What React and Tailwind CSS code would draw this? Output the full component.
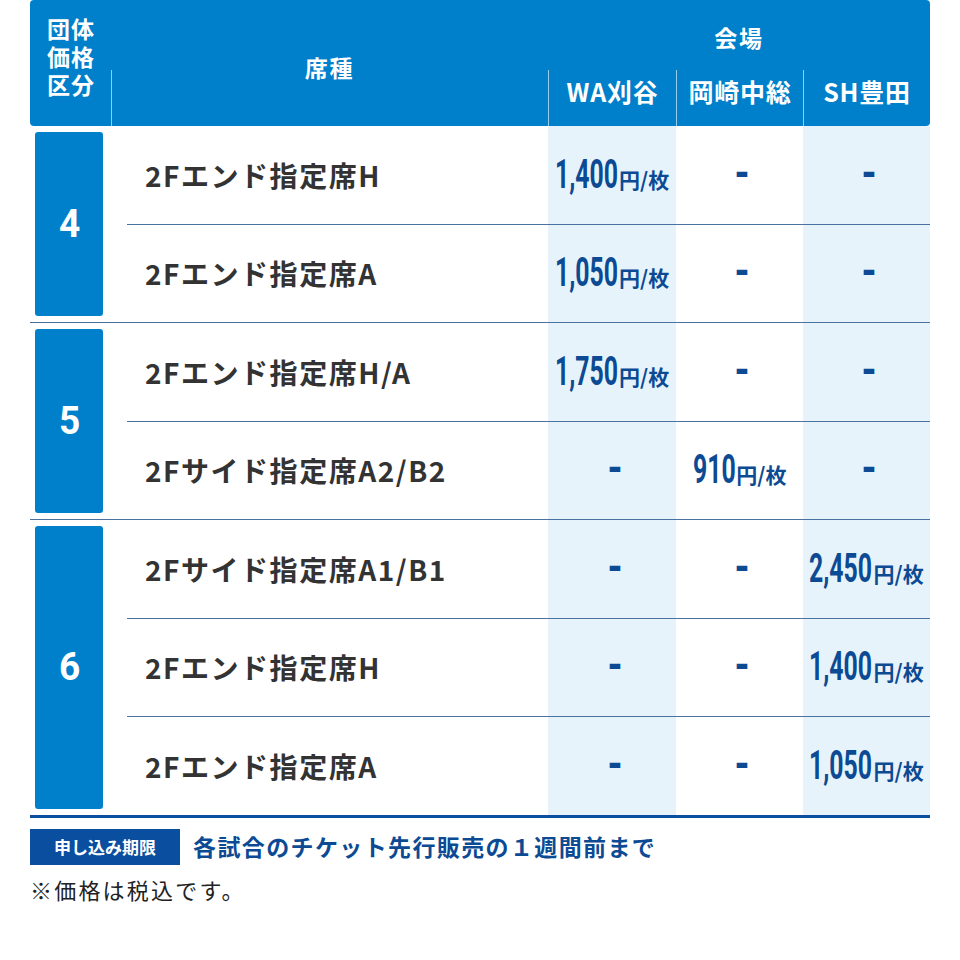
import React, { useLayoutEffect, useRef, useState } from 'react';

const jp = { fontFamily: '"Noto Sans CJK JP", "Noto Sans", sans-serif' };
const jpTight = { fontFamily: '"Liberation Sans", "Noto Sans CJK JP", sans-serif' };
const num = { fontFamily: 'Roboto, "Liberation Sans", sans-serif' };

const groups = [
  {
    no: '4',
    rows: [
      { name: '2Fエンド指定席H', prices: ['1,400', null, null] },
      { name: '2Fエンド指定席A', prices: ['1,050', null, null] },
    ],
  },
  {
    no: '5',
    rows: [
      { name: '2Fエンド指定席H/A', prices: ['1,750', null, null] },
      { name: '2Fサイド指定席A2/B2', prices: [null, '910', null] },
    ],
  },
  {
    no: '6',
    rows: [
      { name: '2Fサイド指定席A1/B1', prices: [null, null, '2,450'] },
      { name: '2Fエンド指定席H', prices: [null, null, '1,400'] },
      { name: '2Fエンド指定席A', prices: [null, null, '1,050'] },
    ],
  },
];

// condensed digits: scale the glyphs and shrink the box to what is seen
const Narrow = ({ text, scale = 0.62, className = '' }) => {
  const ref = useRef(null);
  const [w, setW] = useState(null);
  useLayoutEffect(() => {
    if (ref.current) setW(ref.current.offsetWidth);
  }, [text]);
  return (
    <span className="inline-block overflow-visible" style={w ? { width: w * scale } : undefined}>
      <span ref={ref} style={{ ...num, transform: `scaleX(${scale})` }} className={`inline-block origin-left whitespace-nowrap ${className}`}>
        {text}
      </span>
    </span>
  );
};

const PriceCell = ({ value, tint }) => (
  <div className={`flex items-center justify-center ${tint ? 'bg-[#e7f3fb]' : 'bg-white'}`}>
    {value ? (
      <div className="flex items-baseline text-[#0c4a93]">
        <Narrow text={value} className="text-[40px] font-bold leading-none" />
        <span style={jp} className="text-[21px] font-bold leading-none ml-[1px]">円/枚</span>
      </div>
    ) : (
      <Narrow text="-" scale={0.9} className="text-[40px] font-black leading-none text-[#0c4a93] -mt-[2px] ml-[3px]" />
    )}
  </div>
);

export default function App() {
  return (
    <div className="min-h-screen bg-white px-[30px]" style={jp}>
      {/* header */}
      <div className="grid grid-cols-[81px_437px_128px_127px_127px] grid-rows-[70px_56px] bg-[#0080cb] rounded-[4px] text-white font-bold">
        <div className="row-span-2 col-start-1 row-start-1 flex items-center pl-[17px] pb-[10px]">
          <div style={jpTight} className="text-[23px] leading-[28px] tracking-[0.04em]">
            団体<br />価格<br />区分
          </div>
        </div>
        <div className="col-start-2 row-start-1 row-span-2 flex items-center justify-center pt-[8px] text-[23px] tracking-[0.08em]">
          席種
        </div>
        <div className="col-start-2 row-start-2 border-l border-white/60"></div>
        <div className="col-start-3 col-span-3 row-start-1 flex items-center justify-center pt-[4px] text-[23px] tracking-[0.08em]">
          会場
        </div>
        <div className="col-start-3 row-start-2 border-l border-white/60 flex items-center justify-center pb-[12px] text-[25px] tracking-[0.03em]">WA刈谷</div>
        <div className="col-start-4 row-start-2 border-l border-white/60 flex items-center justify-center pb-[12px] text-[25px] tracking-[0.03em]">岡崎中総</div>
        <div className="col-start-5 row-start-2 border-l border-white/60 flex items-center justify-center pb-[12px] text-[25px] tracking-[0.03em]">SH豊田</div>
      </div>

      {/* body */}
      {groups.map((g, gi) => (
        <div
          key={g.no}
          className={`flex ${gi === groups.length - 1 ? 'border-b-[3px] border-[#0a4e9f]' : 'border-b border-[#4a72a0]'}`}
        >
          <div className="w-[81px] shrink-0 pl-[5px] pr-[8px] py-[6px]">
            <div className="h-full rounded-[3px] bg-[#0080cb] flex items-center justify-center text-white">
              <Narrow text={g.no} scale={0.95} className="text-[39px] font-bold leading-none" />
            </div>
          </div>
          <div className="flex-1 flex flex-col">
            {g.rows.map((r, ri) => (
              <React.Fragment key={ri}>
                {ri > 0 && <div className="ml-[16px] h-px bg-[#4a72a0]"></div>}
                <div className="grid grid-cols-[437px_128px_127px_127px] h-[97.5px]">
                  <div className="flex items-center pl-[34px] text-[28px] font-bold text-[#333] tracking-[0.055em]">
                    {r.name}
                  </div>
                  <PriceCell value={r.prices[0]} tint />
                  <PriceCell value={r.prices[1]} />
                  <PriceCell value={r.prices[2]} tint />
                </div>
              </React.Fragment>
            ))}
          </div>
        </div>
      ))}

      {/* footer */}
      <div className="flex items-center gap-[13px] mt-[11px]">
        <div className="h-[36px] w-[150px] bg-[#0a4e9f] text-white text-[17px] font-bold flex items-center justify-center">
          申し込み期限
        </div>
        <div className="text-[23px] font-bold text-[#0c4a93] tracking-[0.06em]">各試合のチケット先行販売の１週間前まで</div>
      </div>
      <div className="mt-[8px] text-[22px] text-[#222] tracking-[0.1em]">※価格は税込です。</div>
    </div>
  );
}
